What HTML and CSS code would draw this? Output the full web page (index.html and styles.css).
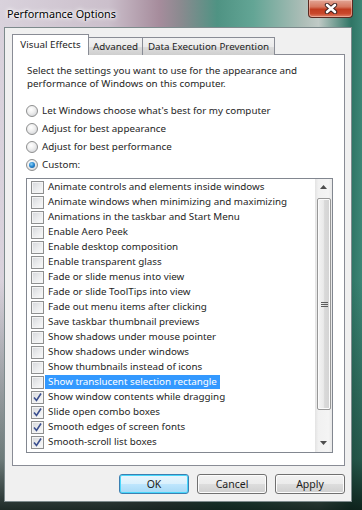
FILE: index.html
```html
<!DOCTYPE html>
<html>
<head>
<meta charset="utf-8">
<link rel="stylesheet" href="styles.css">
</head>
<body>
<div class="window">
  <div class="titlebar">
    <span class="title">Performance Options</span>
    <div class="close">
      <svg width="14" height="11" viewBox="0 0 14 11"><path d="M3 2 L11 9 M11 2 L3 9" stroke="#3a2020" stroke-width="4.4" stroke-linecap="round"/><path d="M3 2 L11 9 M11 2 L3 9" stroke="#ffffff" stroke-width="2.6" stroke-linecap="round"/></svg>
    </div>
  </div>
  <div class="client">
    <div class="tabs">
      <div class="tab active">Visual Effects</div>
      <div class="tab t-adv">Advanced</div>
      <div class="tab t-dep">Data Execution Prevention</div>
    </div>
    <div class="panel">
      <p class="desc">Select the settings you want to use for the appearance and<br>performance of Windows on this computer.</p>
      <div class="radios">
        <div class="radio-row"><span class="radio"></span><span>Let Windows choose what's best for my computer</span></div>
        <div class="radio-row"><span class="radio"></span><span>Adjust for best appearance</span></div>
        <div class="radio-row"><span class="radio"></span><span>Adjust for best performance</span></div>
        <div class="radio-row"><span class="radio on"></span><span>Custom:</span></div>
      </div>
      <div class="list">
        <ul class="items">
          <li class="item"><span class="cb"></span><span class="lbl">Animate controls and elements inside windows</span></li>
          <li class="item"><span class="cb"></span><span class="lbl">Animate windows when minimizing and maximizing</span></li>
          <li class="item"><span class="cb"></span><span class="lbl">Animations in the taskbar and Start Menu</span></li>
          <li class="item"><span class="cb"></span><span class="lbl">Enable Aero Peek</span></li>
          <li class="item"><span class="cb"></span><span class="lbl">Enable desktop composition</span></li>
          <li class="item"><span class="cb"></span><span class="lbl">Enable transparent glass</span></li>
          <li class="item"><span class="cb"></span><span class="lbl">Fade or slide menus into view</span></li>
          <li class="item"><span class="cb"></span><span class="lbl">Fade or slide ToolTips into view</span></li>
          <li class="item"><span class="cb"></span><span class="lbl">Fade out menu items after clicking</span></li>
          <li class="item"><span class="cb"></span><span class="lbl">Save taskbar thumbnail previews</span></li>
          <li class="item"><span class="cb"></span><span class="lbl">Show shadows under mouse pointer</span></li>
          <li class="item"><span class="cb"></span><span class="lbl">Show shadows under windows</span></li>
          <li class="item"><span class="cb"></span><span class="lbl">Show thumbnails instead of icons</span></li>
          <li class="item"><span class="cb"></span><span class="lbl sel">Show translucent selection rectangle</span></li>
          <li class="item"><span class="cb"><svg class="chk" width="11" height="11" viewBox="0 0 11 11"><path d="M2 5.5 L4.5 8.5 L9 1.5" fill="none" stroke="#3b4f8f" stroke-width="1.6"/></svg></span><span class="lbl">Show window contents while dragging</span></li>
          <li class="item"><span class="cb"><svg class="chk" width="11" height="11" viewBox="0 0 11 11"><path d="M2 5.5 L4.5 8.5 L9 1.5" fill="none" stroke="#3b4f8f" stroke-width="1.6"/></svg></span><span class="lbl">Slide open combo boxes</span></li>
          <li class="item"><span class="cb"><svg class="chk" width="11" height="11" viewBox="0 0 11 11"><path d="M2 5.5 L4.5 8.5 L9 1.5" fill="none" stroke="#3b4f8f" stroke-width="1.6"/></svg></span><span class="lbl">Smooth edges of screen fonts</span></li>
          <li class="item"><span class="cb"><svg class="chk" width="11" height="11" viewBox="0 0 11 11"><path d="M2 5.5 L4.5 8.5 L9 1.5" fill="none" stroke="#3b4f8f" stroke-width="1.6"/></svg></span><span class="lbl">Smooth-scroll list boxes</span></li>
        </ul>
        <div class="scrollbar">
          <div class="sb-btn"><svg width="7" height="4" viewBox="0 0 7 4"><path d="M0 4 L3.5 0 L7 4 Z" fill="#4d4d4d"/></svg></div>
          <div class="sb-track">
            <div class="thumb"><span class="grip"></span></div>
          </div>
          <div class="sb-btn"><svg width="7" height="4" viewBox="0 0 7 4"><path d="M0 0 L7 0 L3.5 4 Z" fill="#4d4d4d"/></svg></div>
        </div>
      </div>
    </div>
    <div class="buttons">
      <div class="btn default">OK</div>
      <div class="btn">Cancel</div>
      <div class="btn">Apply</div>
    </div>
  </div>
</div>
</body>
</html>
```

FILE: styles.css
```css
* { box-sizing: border-box; }
html, body { margin: 0; padding: 0; }
body {
  font-family: "Noto Sans", "Liberation Sans", sans-serif;
  font-size: 9.8px;
  color: #1e1e1e;
}
.window {
  width: 362px;
  height: 510px;
  overflow: hidden;
  display: flex;
  flex-direction: column;
  background:
    linear-gradient(180deg, rgba(0,0,0,0) 0%, rgba(0,0,0,0) 55%, rgba(20,50,40,0.55) 90%, rgba(10,25,20,0.9) 100%),
    linear-gradient(90deg, #d9d2dc 0%, #cbbfcb 30%, #a68c9c 44%, #8a8a8f 50%, #4f9383 60%, #63a595 70%, #aebeb8 84%, #c0cac6 88%, #2f7565 97%, #3d8676 100%);
}
.titlebar {
  height: 27px;
  display: flex;
  justify-content: space-between;
  align-items: flex-start;
  padding-left: 7px;
  padding-right: 9px;
}
.title {
  font-size: 10.8px;
  color: #000;
  margin-top: 6px;
  text-shadow: 0 0 6px #fff, 0 0 4px #fff, 0 0 2px #fff;
}
.close {
  width: 45px;
  height: 18px;
  border: 1px solid #5a2a22;
  border-top: none;
  border-radius: 0 0 4px 4px;
  background: linear-gradient(180deg, #e2a595 0%, #d6775f 40%, #c13c20 55%, #c9482c 80%, #e0846a 100%);
  box-shadow: inset 0 0 0 1px rgba(255,220,210,0.45);
  display: flex;
  align-items: center;
  justify-content: center;
}
.client {
  margin: 0 10px 0 4px;
  height: 475px;
  background: #f0f0f0;
  border: 1px solid #7d8a8c;
  padding: 6px 6px 0 7px;
  display: flex;
  flex-direction: column;
}
.tabs {
  display: flex;
  align-items: flex-end;
  height: 21px;
  margin-bottom: -1px;
  position: relative;
  z-index: 1;
}
.tab {
  height: 18px;
  border: 1px solid #898c95;
  border-bottom: none;
  background: linear-gradient(180deg, #f2f2f2 0%, #ebebeb 50%, #dddddd 51%, #cfcfcf 100%);
  line-height: 17px;
  white-space: nowrap;
  text-align: center;
}
.tab.active {
  width: 77px;
  height: 21px;
  background: #ffffff;
  line-height: 19px;
  position: relative;
  z-index: 2;
}
.t-adv { width: 55px; margin-left: -1px; }
.t-dep { width: 133px; margin-left: -1px; }
.panel {
  width: 333px;
  background: #ffffff;
  border: 1px solid #898c95;
  padding: 10px 11px 12px 13px;
}
.desc {
  margin: 0 0 0 1px;
  line-height: 12.5px;
}
.radios {
  margin-top: 11.5px;
}
.radio-row {
  height: 18px;
  display: flex;
  align-items: center;
  gap: 4px;
}
.radio {
  width: 12px;
  height: 12px;
  border-radius: 50%;
  border: 1px solid #8e8f8f;
  background: radial-gradient(circle at 40% 35%, #ffffff 0%, #f0f0f0 40%, #c9cbd0 100%);
  display: inline-flex;
  align-items: center;
  justify-content: center;
  flex: none;
}
.radio.on::after {
  content: "";
  width: 6px;
  height: 6px;
  border-radius: 50%;
  background: radial-gradient(circle at 40% 35%, #8fd3f5 0%, #2a8ad4 45%, #0b4f8a 100%);
}
.list {
  margin-top: 4px;
  height: 275px;
  border: 1px solid #828790;
  display: flex;
  background: #fff;
}
.items {
  list-style: none;
  margin: 0;
  padding: 1px 0 0 4px;
  flex: 1;
}
.item {
  height: 15px;
  display: flex;
  align-items: center;
  white-space: nowrap;
}
.cb {
  width: 13px;
  height: 13px;
  border: 1px solid #8e8f8f;
  background: linear-gradient(135deg, #d4d6da 0%, #eaebec 50%, #fbfbfb 100%);
  box-shadow: inset 0 0 0 1px #f4f4f4;
  flex: none;
  display: flex;
  align-items: center;
  justify-content: center;
}
.chk { display: block; }
.lbl {
  margin-left: 1px;
  padding: 0 3px;
  line-height: 14px;
}
.lbl.sel {
  background: #3399ff;
  color: #fff;
}
.scrollbar {
  width: 17px;
  display: flex;
  flex-direction: column;
  background: linear-gradient(90deg, #e3e3e3 0%, #f1f1f1 20%, #f4f4f4 80%, #e8e8e8 100%);
}
.sb-btn {
  height: 17px;
  display: flex;
  align-items: center;
  justify-content: center;
}
.sb-track {
  flex: 1;
  padding-top: 2px;
}
.thumb {
  margin: 0 1px 0 2px;
  height: 212px;
  border: 1px solid #979797;
  border-radius: 2px;
  background: linear-gradient(90deg, #f4f4f4 0%, #eaeaea 45%, #d9d9d9 55%, #d3d3d3 100%);
  box-shadow: inset 0 0 0 1px #fbfbfb;
  display: flex;
  align-items: center;
  justify-content: center;
}
.grip {
  width: 7px;
  height: 6px;
  background: repeating-linear-gradient(180deg, #5d5d5d 0px, #5d5d5d 1px, transparent 1px, transparent 2px);
  margin-top: 2px;
}
.buttons {
  margin-top: 8px;
  width: 333px;
  display: flex;
  justify-content: flex-end;
  gap: 8px;
}
.btn {
  width: 70px;
  height: 20px;
  border: 1px solid #707070;
  border-radius: 3px;
  background: linear-gradient(180deg, #f2f2f2 0%, #ebebeb 50%, #dddddd 51%, #cfcfcf 100%);
  box-shadow: inset 0 0 0 1px #fcfcfc;
  text-align: center;
  line-height: 18px;
  font-size: 10.5px;
}
.btn.default {
  border-color: #3c7fb1;
  background: linear-gradient(180deg, #eaf6fd 0%, #d9f0fc 50%, #bee6fd 51%, #a7d9f5 100%);
  box-shadow: inset 0 0 0 1px #48d7fb;
}
```
